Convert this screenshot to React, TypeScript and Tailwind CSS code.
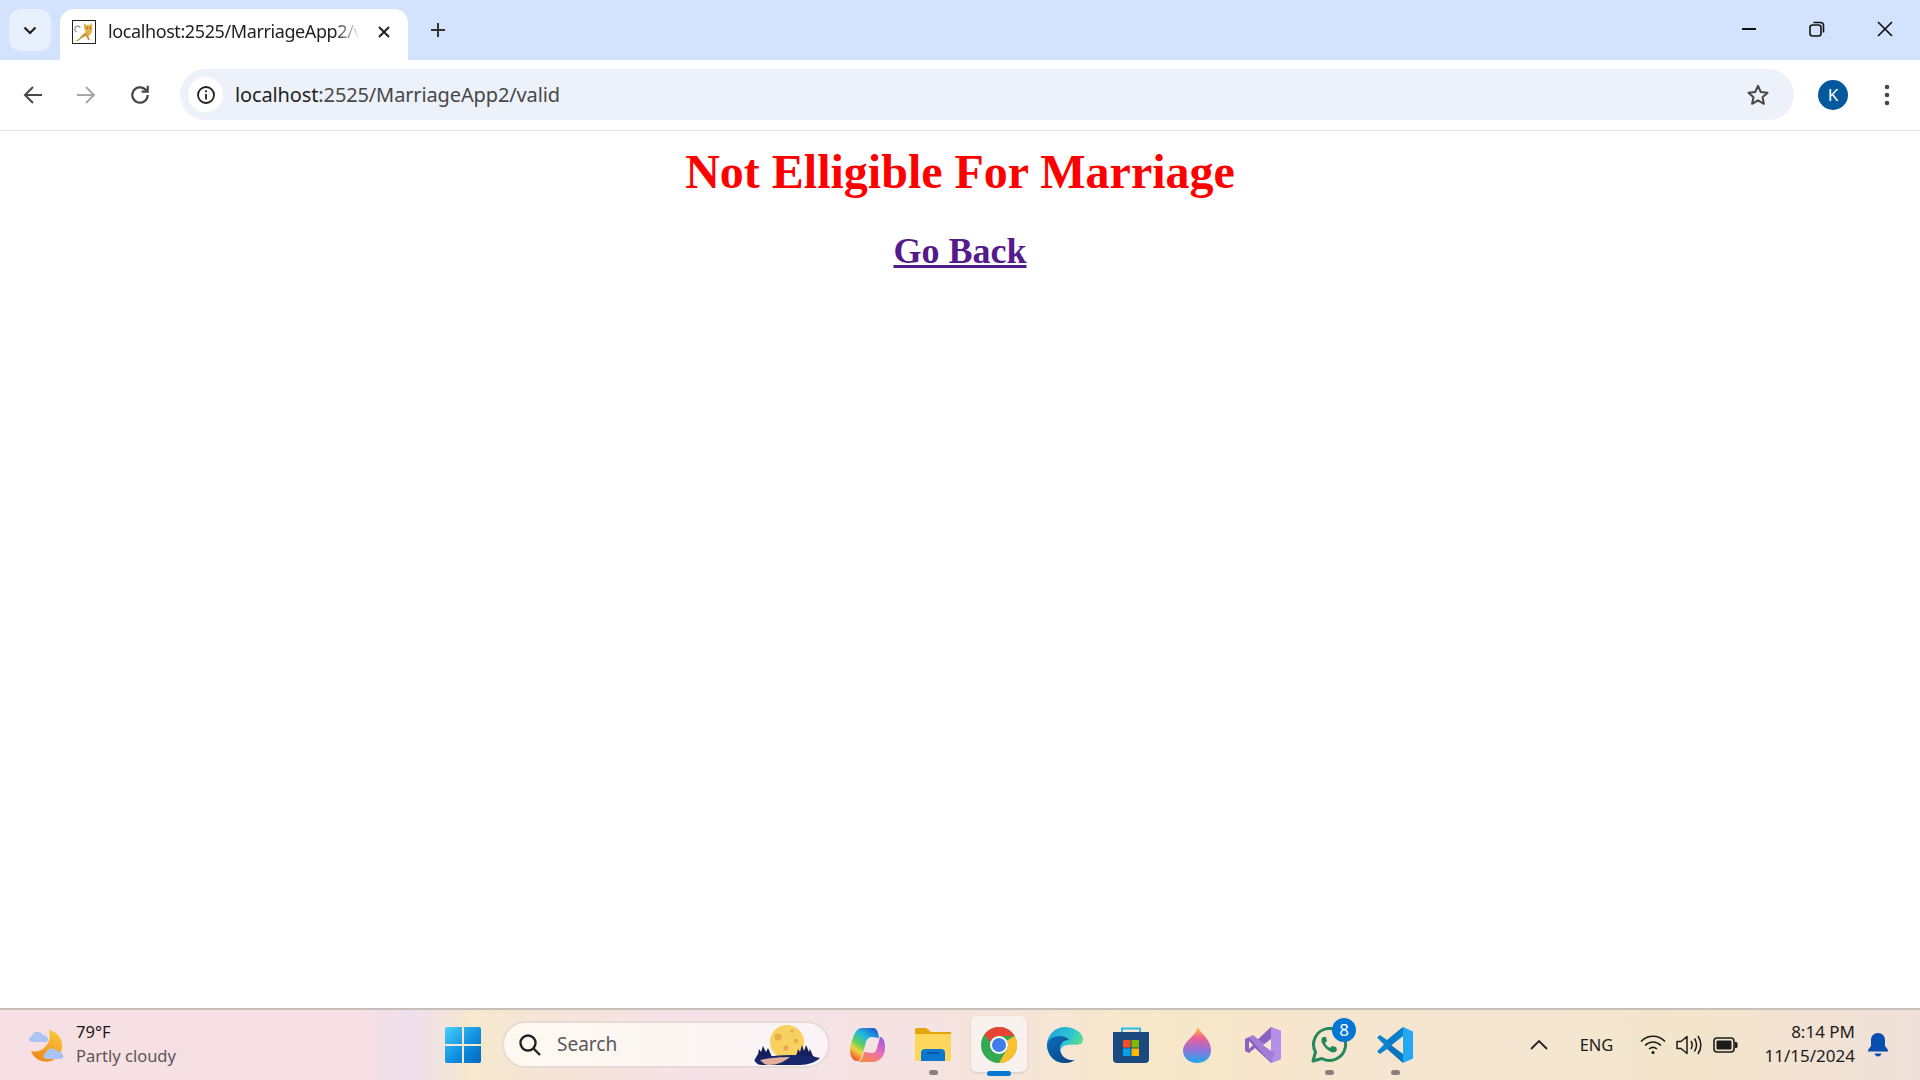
const uiFont = { fontFamily: '"Noto Sans", "Open Sans", sans-serif' };

const TabBar = () => (
  <div className="flex h-[60px] shrink-0 bg-[#d3e3fd]">
    {/* Tab search */}
    <div className="ml-[9px] mt-[9px] flex h-[42px] w-[42px] items-center justify-center rounded-xl bg-[#e9f0fd]">
      <svg width="16" height="16" viewBox="0 0 16 16" fill="none" stroke="#1f1f1f" strokeWidth="2.200">
        <path d="M2.500 5.500L8 11l5.500-5.500" />
      </svg>
    </div>

    {/* Active tab */}
    <div className="ml-[9px] mt-[9px] flex h-[51px] w-[348px] items-center rounded-t-[14px] bg-white pb-[6px] pl-[12px]">
      <svg width="24" height="24" viewBox="0 0 24 24" className="shrink-0">
        <rect x="0.500" y="0.500" width="23" height="23" fill="#fff" stroke="#222" />
        <path d="M2 21c3 0 6-3 8-6 2-2 4-3 5-3l1 3 2 5h-2l-2-4-4 2-4 3z" fill="#c99a3e" />
        <path d="M12 3l2.500 2h3L20 3l.5 6-1.500 5-2.500 2-2.500-3-2-5z" fill="#e3b04b" />
        <path d="M14.500 8h1.500M17.500 8H19" stroke="#6b4a1a" strokeWidth="1" />
        <path d="M5 12c-3-1-3-5 0-6 2-.5 3 1 3 2" stroke="#8f8f8f" strokeWidth="1.200" fill="none" />
      </svg>
      <span className="ml-[12px] w-[252px] overflow-hidden whitespace-nowrap text-[18px] tracking-[-0.4px] text-[#1f1f1f] [mask-image:linear-gradient(90deg,#000_90%,transparent_100%)]">
        localhost:2525/MarriageApp2/valid
      </span>
      <svg width="14" height="14" viewBox="0 0 14 14" stroke="#1f1f1f" strokeWidth="2" className="ml-[17px]">
        <path d="M2 2l10 10M12 2L2 12" />
      </svg>
    </div>

    {/* New tab */}
    <div className="ml-[22px] flex h-[60px] items-center">
      <svg width="16" height="16" viewBox="0 0 16 16" stroke="#333" strokeWidth="2">
        <path d="M8 1v14M1 8h14" />
      </svg>
    </div>

    {/* Window controls */}
    <div className="ml-auto flex h-[58px] items-center pr-[1px]">
      <div className="flex w-[68px] justify-center">
        <svg width="16" height="16" viewBox="0 0 16 16" stroke="#111" strokeWidth="2">
          <path d="M1 8h14" />
        </svg>
      </div>
      <div className="flex w-[68px] justify-center">
        <svg width="16" height="16" viewBox="0 0 16 16" fill="none" stroke="#111" strokeWidth="1.600">
          <rect x="1" y="4" width="11" height="11" rx="2.500" />
          <path d="M4.500 1.500h7a3 3 0 0 1 3 3v7" />
        </svg>
      </div>
      <div className="flex w-[68px] justify-center">
        <svg width="16" height="16" viewBox="0 0 16 16" stroke="#111" strokeWidth="1.700">
          <path d="M1 1l14 14M15 1L1 15" />
        </svg>
      </div>
    </div>
  </div>
);

const ToolBar = () => (
  <div className="flex h-[71px] shrink-0 items-start border-b border-[#e1e1e1] bg-white">
    <div className="flex h-[69px] w-[180px] items-center justify-between pl-[23px] pr-[29px] pt-[1px]">
      <svg width="20" height="20" viewBox="0 0 20 20" fill="none" stroke="#474747" strokeWidth="2">
        <path d="M19 10H2M10 2l-8 8 8 8" />
      </svg>
      <svg width="20" height="20" viewBox="0 0 20 20" fill="none" stroke="#a8a8a8" strokeWidth="2">
        <path d="M1 10h17M10 2l8 8-8 8" />
      </svg>
      <svg width="22" height="22" viewBox="0 0 20 20" fill="none" stroke="#474747" strokeWidth="2">
        <path d="M17 10a7 7 0 1 1-2.200-5.100L17 7" />
        <path d="M17 1.500V7h-5.500" />
      </svg>
    </div>

    {/* Omnibox */}
    <div className="mt-[9px] flex h-[51px] w-[1614px] items-center rounded-full bg-[#ecf1fa] pl-[8px] pr-[24px]">
      <div className="flex h-[35px] w-[35px] items-center justify-center rounded-full bg-white">
        <svg width="20" height="20" viewBox="0 0 20 20" fill="none" stroke="#1f1f1f" strokeWidth="1.800">
          <circle cx="10" cy="10" r="8" />
          <path d="M10 9v5.500M10 5.200v2" />
        </svg>
      </div>
      <span className="ml-[12px] whitespace-nowrap text-[20px] tracking-[-0.13px] text-[#474747]">
        <span className="text-[#1f1f1f]">localhost</span>:2525/MarriageApp2/valid
      </span>
      <svg width="24" height="24" viewBox="0 0 24 24" fill="none" stroke="#474747" strokeWidth="2" className="ml-auto">
        <path d="M12 2.800l2.800 6.200 6.700.7-5 4.500 1.400 6.600L12 17.400l-5.900 3.400 1.400-6.600-5-4.500 6.700-.7z" strokeLinejoin="round" />
      </svg>
    </div>

    {/* Profile and menu */}
    <div className="flex h-[69px] flex-1 items-center pt-[1px]">
      <div className="ml-[24px] flex h-[30px] w-[30px] items-center justify-center rounded-full bg-[#04589c] text-[17px] text-white">
        K
      </div>
      <svg width="6" height="22" viewBox="0 0 6 22" fill="#474747" className="ml-[36px]">
        <circle cx="3" cy="3" r="2.300" />
        <circle cx="3" cy="11" r="2.300" />
        <circle cx="3" cy="19" r="2.300" />
      </svg>
    </div>
  </div>
);

const Content = () => (
  <main className="flex-1 bg-white text-center font-['Liberation_Serif',serif] font-bold">
    <h1 className="mt-[13px] text-[48px] leading-[55px] text-[#ff0000]">Not Elligible For Marriage</h1>
    <a href="#" className="mt-[32px] inline-block text-[36px] leading-[41px] text-[#551a8b] underline">
      Go Back
    </a>
  </main>
);

const WeatherIcon = () => (
  <svg width="38" height="36" viewBox="0 0 38 36">
    <defs>
      <linearGradient id="moon" x1="0.800" y1="0" x2="0.200" y2="1">
        <stop offset="0" stopColor="#f9c93a" />
        <stop offset="1" stopColor="#f1851b" />
      </linearGradient>
    </defs>
    <path d="M21 3A16 16 0 1 1 3 24C12 27 25 18 21 3z" fill="url(#moon)" />
    <path d="M4 15c-4 0-4-5 0-6 1-5 8-6 11-1 5 0 7 6 3 7z" fill="#a9c5f4" />
    <path d="M19 32c-4 0-5-5-1-6 1-5 8-6 11-2 5-1 9 7 4 8z" fill="#a9c5f4" />
  </svg>
);

const WindowsLogo = () => (
  <svg width="36" height="36" viewBox="0 0 36 36">
    <defs>
      <linearGradient id="win" x1="0" y1="0" x2="1" y2="1">
        <stop offset="0" stopColor="#4ad0fb" />
        <stop offset="0.550" stopColor="#0f8fe0" />
        <stop offset="1" stopColor="#0067c0" />
      </linearGradient>
    </defs>
    <path d="M2 0h15v17H0V2a2 2 0 0 1 2-2zM19 0h15a2 2 0 0 1 2 2v15H19zM0 19h17v17H2a2 2 0 0 1-2-2zM19 19h17v15a2 2 0 0 1-2 2H19z" fill="url(#win)" />
  </svg>
);

const MoonScene = () => (
  <svg width="68" height="40" viewBox="0 0 68 40">
    <circle cx="33" cy="17" r="17" fill="#f8d160" />
    <circle cx="24" cy="12" r="3.500" fill="#e3ae45" />
    <circle cx="38" cy="6" r="1.800" fill="#e3ae45" />
    <circle cx="42" cy="16" r="2.200" fill="#e3ae45" />
    <circle cx="32" cy="23" r="2.600" fill="#e8a550" />
    <path d="M1 34l3-5 1-5 2 3 2-6 3 6 2-4 4 9 4 3H1zM41 32l2-4 1-4 2 3 2-7 2 6 2-6 3 7 1-3 3 7 4 2z" fill="#14205c" />
    <path d="M0 35c14-5 44-7 66-2-4 4-12 7-20 7H8c-4 0-6-2-8-5z" fill="#17276e" />
    <path d="M6 35c8-2 20-3 30-3-4 3-10 8-22 8-4-1-6-3-8-5z" fill="#e2ae9e" />
  </svg>
);

const Copilot = () => (
  <svg width="36" height="36" viewBox="0 0 36 36">
    <defs>
      <linearGradient id="cop-a" x1="0.800" y1="0" x2="0.200" y2="1">
        <stop offset="0" stopColor="#1f5fd0" />
        <stop offset="0.300" stopColor="#1fb8e0" />
        <stop offset="0.550" stopColor="#58d060" />
        <stop offset="0.750" stopColor="#f4d03f" />
        <stop offset="1" stopColor="#f0502f" />
      </linearGradient>
      <linearGradient id="cop-b" x1="0.800" y1="0" x2="0.200" y2="1">
        <stop offset="0" stopColor="#9a5ce8" />
        <stop offset="0.500" stopColor="#ee6fb0" />
        <stop offset="1" stopColor="#f98a3c" />
      </linearGradient>
    </defs>
    <path d="M13 1h11c3 0 4 2 5 5l1 5-7-1c-3 0-5 2-6 5l-4 14c-1 3-3 5-5 5-4 0-7-5-7-10 0-5 2-11 4-16 2-4 4-7 8-7z" fill="url(#cop-a)" />
    <path d="M23 35H12c-2 0-3-1-3-1 3 0 4-2 5-5l1-4 8 1c3 0 4-2 5-5l3-11c3 0 5 4 5 10 0 8-4 15-13 15z" fill="url(#cop-b)" />
  </svg>
);

const FileExplorer = () => (
  <svg width="36" height="34" viewBox="0 0 36 34">
    <path d="M0 2a2 2 0 0 1 2-2h9l5 4h20v6H0z" fill="#e2a50a" />
    <path d="M0 6h36v27H0z" fill="#fdd75c" />
    <path d="M6 33v-8a4 4 0 0 1 4-4h16a4 4 0 0 1 4 4v8z" fill="#0a78cf" />
    <path d="M12 25h12" stroke="#0a4f92" strokeWidth="1.500" />
  </svg>
);

const ChromeLogo = () => (
  <svg width="36" height="36" viewBox="0 0 36 36">
    <circle cx="18" cy="18" r="18" fill="#34a853" />
    <path d="M18 0a18 18 0 0 1 15.600 9H18a9 9 0 0 0-8.500 6L3.500 7.500A18 18 0 0 1 18 0z" fill="#ea4335" />
    <path d="M33.600 9A18 18 0 0 1 18 36l7.800-13.500a9 9 0 0 0 0-9z" fill="#fbc02d" />
    <circle cx="18" cy="18" r="9" fill="#fff" />
    <circle cx="18" cy="18" r="7" fill="#3f7ee8" />
  </svg>
);

const EdgeLogo = () => (
  <svg width="36" height="36" viewBox="0 0 36 36">
    <defs>
      <linearGradient id="edge-a" x1="0" y1="0" x2="1" y2="0.600">
        <stop offset="0" stopColor="#1b9de2" />
        <stop offset="0.600" stopColor="#2fc7cf" />
        <stop offset="1" stopColor="#6fe26e" />
      </linearGradient>
      <linearGradient id="edge-b" x1="0" y1="0" x2="1" y2="1">
        <stop offset="0" stopColor="#0d6fb8" />
        <stop offset="1" stopColor="#0a3f86" />
      </linearGradient>
    </defs>
    <path d="M18 0C8 0 0 8 0 18c0 9 7 18 17 18 5 0 8-1 11-3-6 2-12-1-14-5-2-5 1-10 7-10 7-1 15 2 15-6C36 6 27 0 18 0z" fill="url(#edge-a)" />
    <path d="M0 18c0 9 7 18 17 18 5 0 8-1 11-3-6 1-12-2-14-7-2-4-1-8 1-10 2-3 5-3 7-3-2-3-6-4-9-4C6 9 0 13 0 18z" fill="url(#edge-b)" />
  </svg>
);

const StoreLogo = () => (
  <svg width="36" height="36" viewBox="0 0 36 36">
    <path d="M9 5V1.500h18V5" fill="none" stroke="#2bbcee" strokeWidth="2" />
    <path d="M0 5h36v27a4 4 0 0 1-4 4H4a4 4 0 0 1-4-4z" fill="#1a4a80" />
    <path d="M10 13h7.500v7.500H10z" fill="#f25022" />
    <path d="M18.500 13H26v7.500h-7.500z" fill="#7fba00" />
    <path d="M10 21.500h7.500V29H10z" fill="#00a4ef" />
    <path d="M18.500 21.500H26V29h-7.500z" fill="#ffb900" />
  </svg>
);

const PaintLogo = () => (
  <svg width="28" height="36" viewBox="0 0 28 36">
    <defs>
      <linearGradient id="drop" x1="0.500" y1="0" x2="0.500" y2="1">
        <stop offset="0" stopColor="#fbc531" />
        <stop offset="0.300" stopColor="#ee5f96" />
        <stop offset="0.600" stopColor="#9b70d4" />
        <stop offset="1" stopColor="#1fa8ec" />
      </linearGradient>
    </defs>
    <path d="M15 0c1 5 13 12 13 23 0 8-6 13-14 13S0 31 0 23C0 15 12 10 15 0z" fill="url(#drop)" />
  </svg>
);

const VisualStudio = () => (
  <svg width="36" height="36" viewBox="0 0 36 36">
    <path d="M26 0l10 4v28l-10 4-16-15-6 5-4-2V12l4-2 6 5z" fill="#8e62c0" />
    <path d="M26 0l10 4v28l-10 4z" fill="#b48fe6" />
    <path d="M4 10l22 26 4-10L8 8z" fill="#a27ed8" />
    <path d="M4 14v8l4-4zM18 18l8-6v12z" fill="#f6e8d3" />
  </svg>
);

const WhatsApp = () => (
  <svg width="36" height="36" viewBox="0 0 36 36" fill="none">
    <path
      d="M2 34l2.500-9A16 16 0 1 1 11 31.500z"
      stroke="#23885a"
      strokeWidth="3"
      strokeLinejoin="round"
    />
    <path
      d="M12 10c-2 1-2 4-1 6 2 4 5 7 9 9 3 1 5 0 6-2l-1-3-4-1-2 2c-2-1-4-3-5-5l2-2-1-4z"
      fill="#23885a"
    />
  </svg>
);

const VsCode = () => (
  <svg width="36" height="36" viewBox="0 0 36 36">
    <path d="M26 0l10 4.500v27L26 36z" fill="#23a9f2" />
    <path d="M26 0v9L10 22l-7 5-3-2.500 7-7-7-7L3 8l7 5z" fill="#0d84cf" />
    <path d="M26 36L10 22l4-4 12 9z" fill="#0a74bd" />
    <path d="M26 0L14 18l-4-5z" fill="#0a74bd" opacity="0.500" />
  </svg>
);

// taskbar button, the dot under it marks a running app
const TaskIcon = ({ children, running }: { children: React.ReactNode; running?: boolean }) => (
  <div className="relative flex h-[70px] w-[66px] items-center justify-center">
    {children}
    {running && <span className="absolute bottom-[5px] h-[5px] w-[9px] rounded-full bg-[#87807c]" />}
  </div>
);

const TaskBar = () => (
  <footer
    className="flex h-[72px] shrink-0 border-t-2 border-[#c6bfba] bg-[linear-gradient(90deg,#f6e0e3_0%,#f6e0e4_19%,#eedfee_21.500%,#f6e9cd_24.500%,#f5e5d5_28%,#f5e2e8_36%,#f5e3e3_48%,#f7e8c9_60%,#f6e5cf_70%,#f5e6d2_80%,#f3e5cb_88%,#efe0da_100%)]"
    style={uiFont}
  >
    {/* Weather */}
    <div className="flex w-[430px] items-center pl-[28px]">
      <WeatherIcon />
      <div className="ml-[10px] -mt-[2px] flex flex-col text-[16.500px] leading-[24px]">
        <span className="text-[#1a1a1a]">79°F</span>
        <span className="text-[#5c5658]">Partly cloudy</span>
      </div>
    </div>

    <TaskIcon>
      <WindowsLogo />
    </TaskIcon>

    {/* Search */}
    <div className="ml-[6px] mt-[11px] flex h-[47px] w-[328px] items-center justify-between rounded-full border-2 border-[#e6dbd6] bg-[linear-gradient(90deg,#fdf9f0,#fbf3f6)] pl-[14px] pr-[6px]">
      <div className="flex items-center">
        <svg width="24" height="24" viewBox="0 0 24 24" fill="none" stroke="#222" strokeWidth="2.400">
          <circle cx="10" cy="10" r="7.500" />
          <path d="M15.500 15.500l6.500 6.500" />
        </svg>
        <span className="ml-[15px] text-[19px] text-[#5c5658]">Search</span>
      </div>
      <MoonScene />
    </div>

    <div className="ml-[4px] flex">
      <TaskIcon>
        <Copilot />
      </TaskIcon>
      <TaskIcon running>
        <FileExplorer />
      </TaskIcon>
      <div className="relative flex h-[70px] w-[66px] items-center justify-center">
        <div className="absolute left-[5px] top-[6px] h-[56px] w-[56px] rounded-md bg-[#f9f1ee] shadow-sm" />
        <div className="relative">
          <ChromeLogo />
        </div>
        <span className="absolute bottom-[4px] h-[5px] w-[24px] rounded-full bg-[#0078d4]" />
      </div>
      <TaskIcon>
        <EdgeLogo />
      </TaskIcon>
      <TaskIcon>
        <StoreLogo />
      </TaskIcon>
      <TaskIcon>
        <PaintLogo />
      </TaskIcon>
      <TaskIcon>
        <VisualStudio />
      </TaskIcon>
      <TaskIcon running>
        <WhatsApp />
        <span className="absolute left-[36px] top-[8px] flex h-[24px] w-[24px] items-center justify-center rounded-full bg-[#0078d4] text-[17px] text-white">
          8
        </span>
      </TaskIcon>
      <TaskIcon running>
        <VsCode />
      </TaskIcon>
    </div>

    {/* System tray */}
    <div className="ml-auto flex items-center text-[#1c1c1c]">
      <div className="flex w-[58px] justify-center">
        <svg width="18" height="12" viewBox="0 0 18 12" fill="none" stroke="#222" strokeWidth="1.800">
          <path d="M1 10l8-8 8 8" />
        </svg>
      </div>
      <div className="flex w-[57px] justify-center text-[16.500px]">ENG</div>
      <div className="ml-[10px] flex w-[36px] justify-center">
        <svg width="26" height="20" viewBox="0 0 26 20" fill="none" stroke="#1c1c1c" strokeWidth="1.600">
          <path d="M1 6.500c7-7 17-7 24 0M5 10.500c5-4.500 11-4.500 16 0M9 14c2.500-2 5.500-2 8 0" />
          <circle cx="13" cy="17.500" r="1.600" fill="#1c1c1c" stroke="none" />
        </svg>
      </div>
      <div className="flex w-[36px] justify-center">
        <svg width="26" height="22" viewBox="0 0 26 22" fill="none" stroke="#1c1c1c" strokeWidth="1.500">
          <path d="M1 7.500h4l6-5v17l-6-5H1z" strokeLinejoin="round" />
          <path d="M15 7c1.500 2.500 1.500 5.500 0 8M18.500 4.500c2.500 4 2.500 9 0 13M22 2c3.500 5.500 3.500 12.500 0 18" />
        </svg>
      </div>
      <div className="flex w-[36px] justify-center">
        <svg width="25" height="16" viewBox="0 0 25 16">
          <rect x="1" y="1" width="20" height="14" rx="3" fill="none" stroke="#1c1c1c" strokeWidth="1.600" />
          <rect x="3.500" y="3.500" width="15" height="9" rx="1" fill="#1c1c1c" />
          <path d="M22 5h1a1.500 1.500 0 0 1 1.500 1.500v3A1.500 1.500 0 0 1 23 11h-1z" fill="#1c1c1c" />
        </svg>
      </div>
      <div className="-mt-[2px] flex w-[112px] flex-col items-end text-[17px] leading-[24px]">
        <span>8:14 PM</span>
        <span>11/15/2024</span>
      </div>
      <div className="flex w-[46px] justify-center">
        <svg width="20" height="24" viewBox="0 0 20 24">
          <path d="M10 0c4 0 7 3 7 7v6l3 4v1.500H0V17l3-4V7c0-4 3-7 7-7z" fill="#0a4db0" />
          <path d="M6.500 20.500h7c-.5 2-2 3-3.500 3s-3-1-3.500-3z" fill="#0a4db0" />
        </svg>
      </div>
      <div className="w-[19px]" />
    </div>
  </footer>
);

export default function App() {
  return (
    <div className="flex h-[1080px] w-[1920px] flex-col overflow-hidden bg-white">
      <div style={uiFont} className="flex flex-col">
        <TabBar />
        <ToolBar />
      </div>
      <Content />
      <TaskBar />
    </div>
  );
}
